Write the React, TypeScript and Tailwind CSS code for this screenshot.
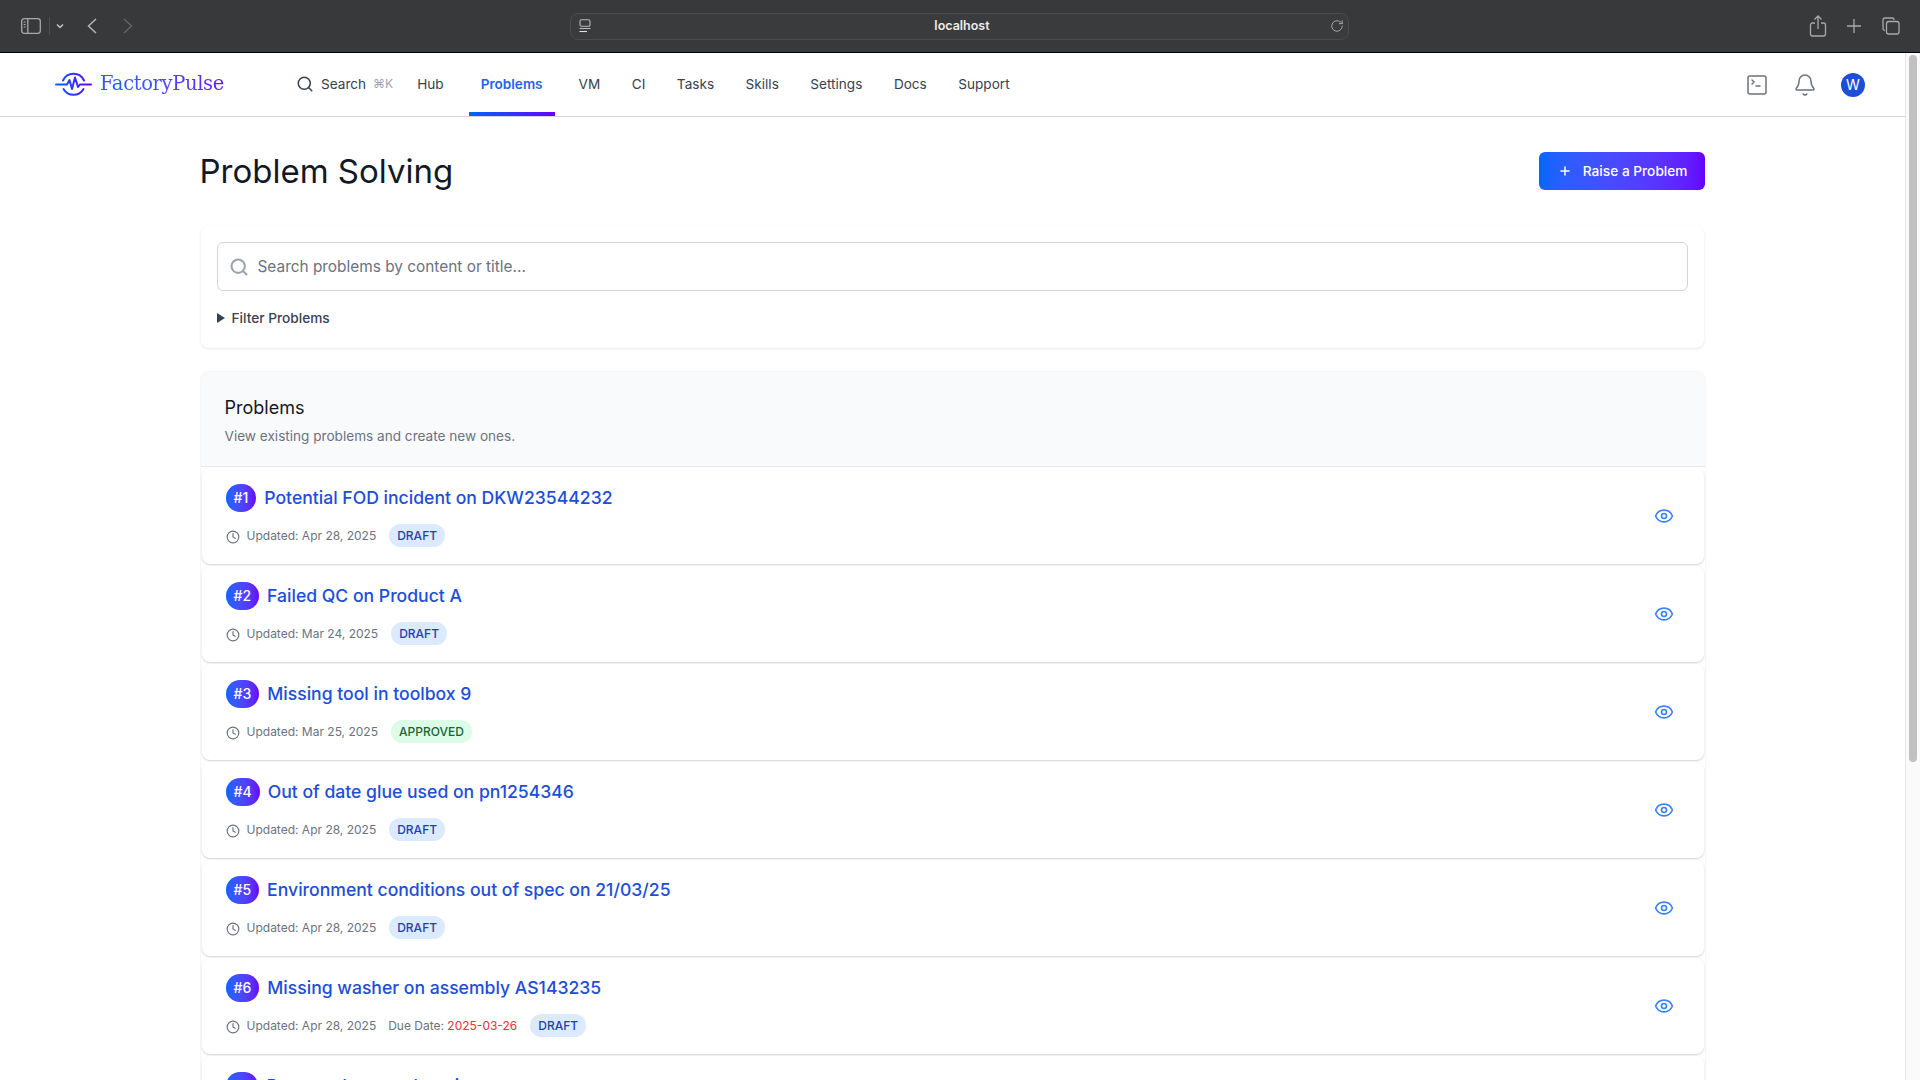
import { Bell, Clock, Eye, Plus, RotateCw, Search, SquareTerminal } from 'lucide-react';

const navItems = ['VM', 'CI', 'Tasks', 'Skills', 'Settings', 'Docs', 'Support'];

const problems = [
  { id: 1, title: 'Potential FOD incident on DKW23544232', updated: 'Apr 28, 2025', status: 'DRAFT' },
  { id: 2, title: 'Failed QC on Product A', updated: 'Mar 24, 2025', status: 'DRAFT' },
  { id: 3, title: 'Missing tool in toolbox 9', updated: 'Mar 25, 2025', status: 'APPROVED' },
  { id: 4, title: 'Out of date glue used on pn1254346', updated: 'Apr 28, 2025', status: 'DRAFT' },
  { id: 5, title: 'Environment conditions out of spec on 21/03/25', updated: 'Apr 28, 2025', status: 'DRAFT' },
  { id: 6, title: 'Missing washer on assembly AS143235', updated: 'Apr 28, 2025', due: '2025-03-26', status: 'DRAFT' },
  { id: 7, title: 'Damaged sensor housing', updated: 'Apr 28, 2025', status: 'DRAFT' },
];

function Logo() {
  return (
    <svg width="37" height="25" viewBox="0 0 37 25" fill="none" strokeWidth="2" strokeLinecap="round" strokeLinejoin="round">
      <defs>
        <linearGradient id="logoGrad" gradientUnits="userSpaceOnUse" x1="0" y1="0" x2="37" y2="0">
          <stop offset="0" stopColor="#0066ff" />
          <stop offset="1" stopColor="#6600ff" />
        </linearGradient>
      </defs>
      <path d="M8 9.5A11.5 11.5 0 0 1 29 9.5" stroke="url(#logoGrad)" />
      <path d="M8.5 18A11.5 11.5 0 0 0 28.5 18" stroke="url(#logoGrad)" />
      <path d="M1 13.5H12L14.5 9L17 18L20 6.5L23 16L25 13.5H36" stroke="url(#logoGrad)" />
    </svg>
  );
}

function BrowserBar() {
  return (
    <div className="flex h-[52px] items-center bg-[#38393b]">
      <div className="flex w-[570px] items-center pl-[21px]">
        <svg width="20" height="16" viewBox="0 0 20 16" fill="none" stroke="#a9a9aa" strokeWidth="1.3">
          <rect x="0.7" y="0.7" width="18.6" height="14.6" rx="2.5" />
          <path d="M6.8 0.7V15.3" />
          <path d="M2.7 4H4.7M2.7 6.5H4.7M2.7 9H4.7" strokeWidth="1.1" />
        </svg>
        <div className="ml-[8px] h-[18px] w-px bg-[#4c4d4f]" />
        <svg className="ml-[6px]" width="8" height="6" viewBox="0 0 8 6" fill="none" stroke="#c4c4c5" strokeWidth="1.5">
          <path d="M1 1.5L4 4.5L7 1.5" />
        </svg>
        <svg className="ml-[23px]" width="10" height="16" viewBox="0 0 10 16" fill="none" stroke="#b4b4b5" strokeWidth="1.5">
          <path d="M9 1L1.5 8L9 15" />
        </svg>
        <svg className="ml-[26px]" width="10" height="16" viewBox="0 0 10 16" fill="none" stroke="#636466" strokeWidth="1.5">
          <path d="M1 1L8.5 8L1 15" />
        </svg>
      </div>

      <div className="flex h-[27px] w-[779px] items-center justify-between rounded-lg border border-[#4b4c4e] bg-[#3a3b3d] pl-[8px] pr-[4px]">
        <svg width="12" height="14" viewBox="0 0 12 14" fill="none" stroke="#b9b9ba" strokeWidth="1.1">
          <rect x="1" y="0.8" width="10" height="6.4" rx="1.5" />
          <path d="M0.5 9.5H11.5" />
          <path d="M0.5 12.5H8" stroke="#e0e0e0" />
        </svg>
        <span className="pl-[3px] pt-[1px] text-[12.5px] font-semibold text-[#ececec]">localhost</span>
        <RotateCw size={14} strokeWidth={1.4} className="text-[#b9b9ba]" />
      </div>

      <div className="flex flex-1 items-center justify-end pr-[20px]">
        <svg width="18" height="22" viewBox="0 0 18 22" fill="none" stroke="#a9a9aa" strokeWidth="1.3">
          <path d="M6 8H3.5A2 2 0 0 0 1.5 10V19A2 2 0 0 0 3.5 21H14.5A2 2 0 0 0 16.5 19V10A2 2 0 0 0 14.5 8H12" />
          <path d="M9 14V1.5M5.5 4.5L9 1L12.5 4.5" />
        </svg>
        <svg className="ml-[19px]" width="16" height="16" viewBox="0 0 16 16" fill="none" stroke="#a9a9aa" strokeWidth="1.3">
          <path d="M8 1V15M1 8H15" />
        </svg>
        <svg className="ml-[20px]" width="18" height="18" viewBox="0 0 18 18" fill="none" stroke="#a9a9aa" strokeWidth="1.3">
          <path d="M3 13.5A2 2 0 0 1 1 11.5V3A2 2 0 0 1 3 1H10A2 2 0 0 1 12 3" />
          <rect x="4.5" y="4.5" width="12.5" height="12.5" rx="2.2" />
        </svg>
      </div>
    </div>
  );
}

function TopNav() {
  return (
    <nav className="flex h-[64px] items-center border-b border-[#d1d5db] bg-white pl-[55px] pr-[40px] text-[13.6px] text-[#374151]">
      <div className="mb-[2px]">
        <Logo />
      </div>
      <span className="mb-[2px] ml-[8px] w-[134px] bg-linear-to-r from-[#0066ff] to-[#6600ff] bg-clip-text font-['DejaVu_Serif',serif] text-[19.5px] font-normal leading-6 tracking-[-0.35px] text-transparent">
        FactoryPulse
      </span>

      <Search size={18} strokeWidth={2} className="mb-[1px] ml-[62px]" />
      <div className="mb-[1px] flex items-center">
        <span className="ml-[7px]">Search</span>
        <span className="ml-[7px] text-xs text-[#9ca3af]">⌘K</span>
        <a className="ml-[24px]">Hub</a>
      </div>

      <a className="ml-[25px] flex h-full items-center border-b-4 border-b-transparent px-3 pt-[3px] font-semibold text-[#2563eb] [border-image:linear-gradient(to_right,#0066ff,#6600ff)_1]">
        Problems
      </a>

      <div className="mb-[1px] ml-[24px] flex items-center gap-[31.5px]">
        {navItems.map((item) => (
          <a key={item}>{item}</a>
        ))}
      </div>

      <div className="ml-auto flex items-center">
        <SquareTerminal size={24} strokeWidth={1.5} className="text-[#6b7280]" />
        <Bell size={24} strokeWidth={1.5} className="ml-[24px] text-[#6b7280]" />
        <div className="ml-[24px] flex h-6 w-6 items-center justify-center rounded-full bg-[#1d4ed8] text-sm text-white">
          W
        </div>
      </div>
    </nav>
  );
}

function StatusBadge({ status }: { status: string }) {
  const approved = status === 'APPROVED';
  return (
    <span
      className={`rounded-full px-2 py-[4px] text-xs font-medium leading-4 ${
        approved ? 'bg-[#dcfce7] text-[#166534]' : 'bg-[#dbeafe] text-[#1e40af]'
      }`}
    >
      {status}
    </span>
  );
}

function ProblemRow({ problem }: { problem: (typeof problems)[number] }) {
  return (
    <div className="mx-px mb-[2px] flex h-24 items-center justify-between rounded-lg bg-white py-4 pl-6 pr-[22px] shadow-[0_1px_2px_rgba(0,0,0,0.18)]">
      <div className="flex flex-col gap-3">
        <div className="flex h-7 items-center gap-2">
          <span className="flex h-7 items-center rounded-full bg-linear-to-r from-[#0066ff] to-[#6600ff] px-2 text-sm font-medium text-white">
            #{problem.id}
          </span>
          <span className="text-[17.6px] font-medium text-[#1d4ed8]">{problem.title}</span>
        </div>
        <div className="flex h-6 items-center text-xs text-[#6b7280]">
          <Clock size={14} strokeWidth={2} className="mt-[2px]" />
          <span className="ml-[7px]">Updated: {problem.updated}</span>
          {problem.due && (
            <span className="ml-3">
              Due Date: <span className="text-[#ef2b3d]">{problem.due}</span>
            </span>
          )}
          <span className="ml-[13px]">
            <StatusBadge status={problem.status} />
          </span>
        </div>
      </div>
      <div className="p-2">
        <Eye size={20} strokeWidth={2} className="text-[#3b82f6]" />
      </div>
    </div>
  );
}

export default function App() {
  return (
    <div className="h-screen overflow-hidden bg-white font-['Inter',sans-serif]">
      <BrowserBar />
      <div className="h-px bg-black" />
      <div className="flex h-[1027px]">
        <div className="min-w-0 flex-1">
          <TopNav />
          <main className="mx-auto max-w-[1536px] px-4 pt-[35px]">
            <div className="flex h-[38px] items-center justify-between">
              <h1 className="-ml-px pt-[2px] text-[33px] font-normal text-[#111827]">Problem Solving</h1>
              <button className="flex h-[38px] items-center gap-[11px] rounded-md bg-linear-to-r from-[#0066ff] to-[#6600ff] pl-[19px] pr-[17px] text-[13.7px] font-medium text-white">
                <Plus size={14} strokeWidth={2.5} />
                Raise a Problem
              </button>
            </div>

            <div className="mr-px mt-9 h-[122px] rounded-lg bg-white p-4 shadow-[0_1px_3px_rgba(0,0,0,0.1)]">
              <div className="flex h-[49px] items-center rounded-md border border-[#d1d5db] pl-[11px]">
                <Search size={20} strokeWidth={2.5} className="text-[#9ca3af]" />
                <span className="ml-[9px] text-[15.4px] text-[#6b7280]">Search problems by content or title...</span>
              </div>
              <div className="mt-[17px] flex items-center">
                <svg width="8" height="10" viewBox="0 0 8 10" fill="#374151">
                  <path d="M0 0L8 5L0 10Z" />
                </svg>
                <span className="ml-[7px] text-[13.7px] font-medium text-[#374151]">Filter Problems</span>
              </div>
            </div>

            <div className="mt-6 rounded-lg bg-white shadow-[0_0_2px_rgba(0,0,0,0.12)]">
              <div className="h-[95px] rounded-t-lg border-b border-[#e5e7eb] bg-[#f9fafb] px-6 pt-[25px]">
                <h2 className="text-lg font-normal leading-[22px] text-[#111827]">Problems</h2>
                <p className="mt-[7px] text-[13.6px] text-[#6b7280]">View existing problems and create new ones.</p>
              </div>
              <div className="pt-px">
                {problems.map((problem) => (
                  <ProblemRow key={problem.id} problem={problem} />
                ))}
              </div>
            </div>
          </main>
        </div>

        <div className="w-[15px] border-l border-[#e7e7e7] bg-[#fafafa] pl-[3px] pt-[2px]">
          <div className="h-[707px] w-[8px] rounded-full bg-[#c1c1c1]" />
        </div>
      </div>
    </div>
  );
}
